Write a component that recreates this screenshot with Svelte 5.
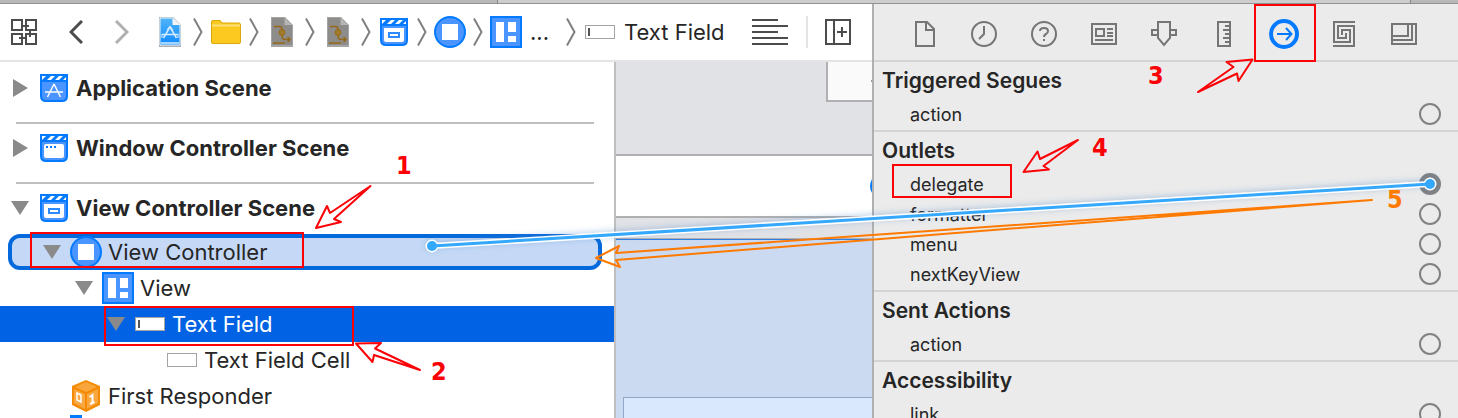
<script lang="ts">
  type Row = { label: string; level: number; icon: string; open?: boolean; state?: string };

  const scenes = [
    { label: "Application Scene", icon: "scene-app", open: false },
    { label: "Window Controller Scene", icon: "scene-window", open: false },
    { label: "View Controller Scene", icon: "scene-view", open: true },
  ];

  const rows: Row[] = [
    { label: "View Controller", level: 1, icon: "controller", open: true, state: "target" },
    { label: "View", level: 2, icon: "view", open: true },
    { label: "Text Field", level: 3, icon: "field", open: true, state: "selected" },
    { label: "Text Field Cell", level: 4, icon: "cell" },
    { label: "First Responder", level: 1, icon: "cube" },
    { label: "", level: 1, icon: "exit" },
  ];

  const crumbs = ["project", "folder", "storyboard", "storyboard", "scene-view", "controller", "view"];

  const tabs = ["file", "history", "help", "identity", "attributes", "size", "connections", "bindings", "effects"];

  const sections = [
    { title: "Triggered Segues", items: ["action"] },
    { title: "Outlets", items: ["delegate", "formatter", "menu", "nextKeyView"] },
    { title: "Sent Actions", items: ["action"] },
    { title: "Accessibility", items: ["link"] },
  ];

  let connected = $state("delegate");
  let activeTab = $state("connections");
</script>

{#snippet chevron()}
  <svg class="chevron" width="10" height="30" viewBox="0 0 10 30">
    <path d="M1 1.5 8.5 15 1 28.5" fill="none" stroke="#7f7f7f" stroke-width="2" />
  </svg>
{/snippet}

{#snippet icon(name: string)}
  {#if name.startsWith("scene")}
    <svg width="28" height="28" viewBox="0 0 28 28">
      <path d="M0 0H28V22Q28 28 22 28H6Q0 28 0 22Z" fill="#057aff" />
      <path d="M2 8H26V22Q26 26 22 26H6Q2 26 2 22Z" fill="#4a95ff" />
      <path d="M2 6V2H6ZM7 6 11 2H15L11 6ZM15 6 19 2H23L19 6ZM23 6 26 3V6Z" fill="#fff" />
      {#if name === "scene-app"}
        <path d="M14 10 20.5 23M14 10 7.5 23M5 18H23" stroke="#fff" stroke-width="1.5" fill="none" />
      {:else if name === "scene-window"}
        <rect x="4" y="10" width="20" height="14" rx="2" fill="#fff" />
        <path d="M6 13H16" stroke="#057aff" stroke-width="2" stroke-dasharray="2" />
      {:else}
        <path d="M4 10H24V22Q24 24 22 24H6Q4 24 4 22Z" fill="#fff" />
        <rect x="9" y="15" width="10" height="4" fill="#fff" stroke="#308aff" stroke-width="2" />
      {/if}
    </svg>
  {:else if name === "controller"}
    <svg width="32" height="32" viewBox="0 0 32 32">
      <circle cx="16" cy="16" r="15" fill="#4a95ff" stroke="#057aff" stroke-width="2" />
      <rect x="8" y="8" width="16" height="16" fill="#fff" />
    </svg>
  {:else if name === "view"}
    <svg width="32" height="32" viewBox="0 0 32 32">
      <rect x="1" y="1" width="30" height="30" fill="#4a95ff" stroke="#057aff" stroke-width="2" />
      <path d="M6 6H14V26H6ZM18 6H26V16H18ZM18 20H26V26H18Z" fill="#fff" />
    </svg>
  {:else if name === "field" || name === "cell"}
    <svg width="30" height="14" viewBox="0 0 30 14">
      <rect x=".5" y=".5" width="29" height="13" fill="#fff" stroke="#a4a4a4" />
      {#if name === "field"}<path d="M4 3V11" stroke="#555" stroke-width="2" />{/if}
    </svg>
  {:else if name === "cube"}
    <svg width="28" height="32" viewBox="0 0 28 32">
      <path d="M14 0 28 6V25L14 32 0 25V6Z" fill="#f58b05" />
      <path d="M14 2 25 7 14 12 3 7Z" fill="#f8a63c" />
      <path d="M2 9 13 14V29L2 23ZM26 9 15 14V29L26 23Z" fill="#f9a740" />
      <path d="M5 13 9 15V22L5 20Z" fill="none" stroke="#fff" stroke-width="1.5" />
      <path d="M17.5 17 20.5 15V23M18 24 22.5 22" fill="none" stroke="#fff" stroke-width="2" />
    </svg>
  {:else if name === "exit"}
    <svg width="32" height="34" viewBox="0 0 32 34">
      <path d="M0 0H12V34H0Z" fill="#057aff" />
    </svg>
  {:else if name === "project"}
    <svg width="24" height="30" viewBox="0 0 24 30">
      <defs>
        <linearGradient id="doc" x1="0" y1="0" x2="0" y2="1">
          <stop offset="0" stop-color="#4fb4f7" />
          <stop offset="1" stop-color="#118aff" />
        </linearGradient>
      </defs>
      <path d="M1 0H15L23 8V30H1Z" fill="#a9afb5" />
      <path d="M2 1H14.5L22 8V28H2Z" fill="url(#doc)" stroke="#e9f4fc" />
      <path d="M14.5 1V8H22Z" fill="#f2f4f5" />
      <path d="M12 10 5.5 21M12 10 18.5 21M3.5 17.5H20.5M3 26H21" stroke="#d3ebff" stroke-width="1.5" fill="none" />
      <path d="M9 13 12 9 15 13M4 18V21M20 18V21" stroke="#d3ebff" fill="none" />
    </svg>
  {:else if name === "folder"}
    <svg width="30" height="24" viewBox="0 0 30 24">
      <path d="M.5 2Q.5.5 2 .5H9Q10 .5 10.5 3H28Q29.5 3 29.5 5V22Q29.5 23.5 28 23.5H2Q.5 23.5.5 22Z" fill="#fbc91f" stroke="#dba80c" />
      <path d="M1 5.5H29" stroke="#ffe07a" stroke-width="2" />
    </svg>
  {:else if name === "storyboard"}
    <svg width="24" height="30" viewBox="0 0 24 30">
      <path d="M1 0H15L23 8V30H1Z" fill="#a5a5a5" />
      <path d="M2 1H14.5L22 8V28H2Z" fill="#8d8c8a" />
      <path d="M14.5 1V8H22Z" fill="#b6b6b6" />
      <path d="M4 9.5H9.5Q12 9.5 12 12V19Q12 22.5 15 22.5H19.5M17.5 20 20 22.5 17.5 25M3 26H15" stroke="#946a17" stroke-width="1.5" fill="none" />
      <circle cx="12" cy="15.5" r="3" fill="#a37b2d" stroke="#946a17" />
    </svg>
  {/if}
{/snippet}

{#snippet tabIcon(name: string)}
  <svg width="32" height="32" viewBox="0 0 32 32" fill="none" stroke="#757575" stroke-width="2">
    {#if name === "file"}
      <path d="M8 4H19L26 11V28H8ZM18 4V12H25" />
    {:else if name === "history"}
      <circle cx="16" cy="16" r="12" />
      <path d="M16 8V16L11 21" />
    {:else if name === "help"}
      <circle cx="16" cy="16" r="12" />
      <path d="M12 13Q12 10 16 10T20 13Q20 15 18 16T16 19M16 21V23" />
    {:else if name === "identity"}
      <path d="M4 6H28V26H4ZM8 11H16V18H8ZM19 11H25M19 15H25M19 18H25M7 22H25" />
    {:else if name === "attributes"}
      <path d="M10 4H22V20L16 27 10 20ZM10 12H4V17H10M22 12H28V17H22" />
    {:else if name === "size"}
      <path d="M10 4H22V28H10ZM22 8H17M22 12H15M22 16H17M22 20H15M22 24H17" />
    {:else if name === "connections"}
      <circle cx="16" cy="16" r="13" stroke="#057aff" stroke-width="4" />
      <path d="M9 16H23M18 10 23.5 16 18 22" stroke="#057aff" />
    {:else if name === "bindings"}
      <path d="M27 4H6V24H22V12H14V17M5 28H26V8H10V20H18V15" />
    {:else}
      <path d="M4 6H28V26H4ZM5 18H20V7M5 22H24V7" />
    {/if}
  </svg>
{/snippet}

{#snippet disclosure(open: boolean | undefined)}
  <span class="disclosure">
    {#if open}
      <svg width="18" height="14" viewBox="0 0 18 14"><path d="M0 0H18L9 14Z" fill="#8a8a8a" /></svg>
    {:else if open === false}
      <svg width="16" height="18" viewBox="0 0 16 18"><path d="M1 0 16 9 1 18Z" fill="#8a8a8a" /></svg>
    {/if}
  </span>
{/snippet}

<div class="window">
  <div class="tabstrip"><span></span><span></span><span></span></div>

  <div class="workspace">
    <main class="editor">
      <nav class="jumpbar" aria-label="Jump bar">
        <button class="related" aria-label="Related items">
          <svg width="26" height="26" viewBox="0 0 26 26" fill="none" stroke="#4c4c4c" stroke-width="2">
            <path d="M1 1H11V11H1ZM15 1H25V11H15ZM1 15H11V25H1ZM15 15H25V25H15ZM11 7H18M19 11V18M8 19H15" />
          </svg>
        </button>
        <button class="back" aria-label="Back">
          <svg width="14" height="24" viewBox="0 0 14 24"><path d="M13 1 2 12 13 23" fill="none" stroke="#4c4c4c" stroke-width="3" /></svg>
        </button>
        <button class="forward" aria-label="Forward">
          <svg width="14" height="24" viewBox="0 0 14 24"><path d="M1 1 12 12 1 23" fill="none" stroke="#b0b0b0" stroke-width="3" /></svg>
        </button>
        {#each crumbs as crumb, i}
          {#if i > 0}{@render chevron()}{/if}
          <button class="crumb" aria-label={crumb}>{@render icon(crumb)}</button>
        {/each}
        <span class="dots">...</span>
        {@render chevron()}
        <button class="current">{@render icon("field")}Text Field</button>
        <button class="lines" aria-label="Editor options">
          <svg width="36" height="26" viewBox="0 0 36 26"><path d="M0 1H26M0 7H36M0 13H26M0 19H36M0 25H36" stroke="#4c4c4c" stroke-width="2" /></svg>
        </button>
        <span class="divider"></span>
        <button aria-label="Add editor">
          <svg width="26" height="26" viewBox="0 0 26 26"><path d="M1 1H25V25H1ZM9 1V25M12 13H22M17 8V18" fill="none" stroke="#4c4c4c" stroke-width="2" /></svg>
        </button>
      </nav>

      <div class="panes">
        <section class="outline" aria-label="Document outline">
          {#each scenes as scene, i}
            {#if i > 0}<hr />{/if}
            <button class="row scene level-0">
              {@render disclosure(scene.open)}
              <span class="icon">{@render icon(scene.icon)}</span>
              {scene.label}
            </button>
          {/each}
          <div class="children">
            {#each rows as row}
              <button class="row level-{row.level} {row.state ?? ''}" aria-label={row.label || "Exit"}>
                {@render disclosure(row.open)}
                <span class="icon">{@render icon(row.icon)}</span>
                {row.label}
              </button>
            {/each}
          </div>
        </section>

        <section class="canvas" aria-label="Canvas">
          <div class="menu-box">
            <svg width="4" height="8" viewBox="0 0 4 8"><path d="M3 3H4V5H3Z" fill="#999" /></svg>
          </div>
          <div class="window-bar"><span></span></div>
          <div class="view-area"><div class="field-area"></div></div>
        </section>
      </div>
    </main>

    <aside class="inspector">
      <div class="tabs">
        {#each tabs as tab}
          <button aria-label={tab} aria-pressed={activeTab === tab} onclick={() => (activeTab = tab)}>
            {@render tabIcon(tab)}
          </button>
        {/each}
      </div>
      {#each sections as section}
        <section class="group">
          <h2>{section.title}</h2>
          {#each section.items as item}
            <div class="outlet">
              <span>{item}</span>
              <button class:connected={connected === item} aria-label="Connect {item}" onclick={() => (connected = item)}></button>
            </div>
          {/each}
        </section>
      {/each}
    </aside>
  </div>

  <!-- connection wire and numbered steps -->
  <svg class="notes" width="1458" height="418" viewBox="0 0 1458 418">
    <defs>
      <filter id="glow" filterUnits="userSpaceOnUse" x="400" y="150" width="1058" height="130">
        <feDropShadow dx="0" dy="-1" stdDeviation="3" flood-color="#4c7fc0" flood-opacity=".4" />
      </filter>
    </defs>
    <g filter="url(#glow)">
      <path d="M432 246 1430 184" stroke="#fff" stroke-width="6" />
      <circle cx="432" cy="246" r="6.5" fill="#fff" />
      <circle cx="1430" cy="184" r="6.5" fill="#fff" />
    </g>
    <path d="M432 246 1430 184" stroke="#33a8fd" stroke-width="3" />
    <circle cx="432" cy="246" r="5" fill="#33a8fd" />
    <circle cx="1430" cy="184" r="5" fill="#33a8fd" />

    <g class="arrows">
      <path d="M370.5 186 330 213 327 206 316 228 341 222 334 219Z" />
      <path d="M420 370 375 348.5 381 343 356 343.5 372.5 362 374 355Z" />
      <path d="M1198 92 1233.5 67 1226.5 62 1252.5 59.5 1238.5 81 1237 73.5Z" />
      <path d="M1078 140 1040 159 1037.5 151.5 1023.5 172 1049 169.5 1043.5 166Z" />
      <path class="orange" d="M1372 200 616 253 619 246 596 258 620 267 616 260Z" />
    </g>
    <g class="boxes">
      <rect x="31" y="233" width="272" height="34" />
      <rect x="105" y="307" width="248" height="38" />
      <rect x="1255" y="5" width="60" height="56" />
      <rect x="893" y="165" width="118" height="32" />
    </g>
    <g class="numbers">
      <text x="396" y="174">1</text>
      <text x="431" y="380">2</text>
      <text x="1148" y="84">3</text>
      <text x="1092" y="156">4</text>
      <text class="orange" x="1387" y="208">5</text>
    </g>
  </svg>
</div>

<style>
  :global(body) {
    margin: 0;
    overflow: hidden;
  }

  .window {
    position: relative;
    display: flex;
    flex-direction: column;
    height: 100vh;
    overflow: hidden;
    background: #fff;
    color: #262626;
    font-family: Inter, "Liberation Sans", sans-serif;
    font-size: 22px;
  }

  button {
    display: flex;
    align-items: center;
    flex-shrink: 0;
    margin: 0;
    padding: 0;
    border: 0;
    background: none;
    color: inherit;
    font: inherit;
    text-align: left;
    white-space: nowrap;
  }

  svg {
    display: block;
    flex-shrink: 0;
  }

  .tabstrip {
    display: flex;
    flex-shrink: 0;
    box-sizing: border-box;
    height: 4px;
    border-bottom: 1px solid #929292;
  }

  .tabstrip span {
    width: 497px;
    background: #b8b8b8;
  }

  .tabstrip span:nth-child(2) {
    flex: 1;
    border: solid #888;
    border-width: 0 1px;
    background: #cdcdcd;
  }

  .tabstrip span:last-child {
    width: 47px;
  }

  .workspace {
    display: flex;
    flex: 1;
    min-height: 0;
  }

  .editor {
    display: flex;
    flex: 1;
    flex-direction: column;
    min-width: 0;
  }

  .jumpbar {
    display: flex;
    align-items: center;
    flex-shrink: 0;
    height: 56px;
    padding: 0 21px 0 11px;
    border-bottom: 2px solid #e4e4e4;
  }

  .back {
    margin: 0 32px;
  }

  .forward {
    margin-right: 18px;
  }

  .crumb {
    justify-content: center;
    width: 46px;
    height: 32px;
  }

  .dots {
    width: 36px;
    padding-left: 1px;
  }

  .current {
    gap: 9px;
    margin-left: 9px;
  }

  .lines {
    margin-left: auto;
  }

  .divider {
    width: 2px;
    height: 32px;
    margin: 0 17px 0 18px;
    background: #e4e4e4;
  }

  .panes {
    display: flex;
    flex: 1;
    min-height: 0;
  }

  .outline {
    flex: 0 0 614px;
    padding-top: 8px;
    border-right: 2px solid #bfbfbf;
    overflow: hidden;
  }

  .outline hr {
    height: 2px;
    margin: 16px 20px 6px 16px;
    border: 0;
    background: #bfbfbf;
  }

  .children {
    padding-top: 8px;
  }

  .row {
    box-sizing: border-box;
    width: 100%;
    height: 36px;
    padding-left: 4px;
  }

  .scene {
    font-weight: 700;
  }

  .level-1 {
    padding-left: 36px;
  }

  .level-2 {
    padding-left: 68px;
  }

  .level-3 {
    padding-left: 100px;
  }

  .level-4 {
    padding-left: 132px;
  }

  .target {
    width: auto;
    min-width: calc(100% - 20px);
    margin: 0 12px 0 8px;
    padding-left: 24px;
    border: 4px solid #0469dc;
    border-radius: 12px;
    background: #c5d9f6;
  }

  .selected {
    background: #0162e3;
    color: #fff;
  }

  .disclosure,
  .icon {
    display: flex;
    align-items: center;
    justify-content: center;
    flex-shrink: 0;
    width: 32px;
  }

  .icon {
    margin: 0 6px 0 2px;
  }

  .canvas {
    display: flex;
    flex: 1;
    flex-direction: column;
    min-width: 0;
    overflow: hidden;
    background: #e1e2e6;
  }

  .menu-box {
    display: flex;
    align-items: center;
    align-self: flex-end;
    justify-content: flex-end;
    flex-shrink: 0;
    width: 44px;
    height: 38px;
    margin-bottom: 52px;
    border: solid #b0b0b0;
    border-width: 0 0 2px 2px;
    background: #fafafa;
  }

  .window-bar {
    display: flex;
    align-items: center;
    justify-content: flex-end;
    flex-shrink: 0;
    height: 60px;
    border: solid #b0b0b0;
    border-width: 2px 0;
    background: #fff;
  }

  .window-bar span {
    width: 24px;
    height: 24px;
    margin-right: -22px;
    border-radius: 50%;
    background: #057aff;
  }

  .view-area {
    flex: 1 0 auto;
    margin-top: 20px;
    padding: 158px 0 0 7px;
    border-top: 1px solid #b0b0b0;
    box-shadow: inset 0 1px #2f7fe8;
    background: #cbdaf1;
  }

  .field-area {
    height: 60px;
    border: solid #93a7c8;
    border-width: 1px 0 0 1px;
    background: #dae8fd;
  }

  .inspector {
    box-sizing: border-box;
    flex: 0 0 586px;
    border-left: 2px solid #b0b0b0;
    background: #ebebeb;
    overflow: hidden;
  }

  .tabs {
    display: flex;
    justify-content: center;
    height: 56px;
    padding-right: 4px;
    border-bottom: 2px solid #d3d3d3;
  }

  .tabs button {
    justify-content: center;
    width: 60px;
    padding-top: 4px;
  }

  .group {
    padding-bottom: 1px;
    border-bottom: 2px solid #d3d3d3;
  }

  h2 {
    margin: 0;
    padding-left: 8px;
    font-size: 21px;
    font-weight: 600;
    line-height: 37px;
  }

  .outlet {
    display: flex;
    align-items: center;
    justify-content: space-between;
    height: 30px;
    padding: 0 17px 0 36px;
    font-size: 18px;
  }

  .outlet button {
    box-sizing: border-box;
    width: 22px;
    height: 22px;
    border: 2px solid #828282;
    border-radius: 50%;
  }

  .outlet button.connected {
    border-width: 5px;
  }

  .notes {
    position: absolute;
    top: 0;
    left: 0;
    pointer-events: none;
  }

  .arrows path {
    fill: none;
    stroke: #fb0207;
    stroke-width: 2;
    stroke-linejoin: round;
  }

  .arrows .orange {
    stroke: #ff7a00;
  }

  .boxes rect {
    fill: none;
    stroke: #fb0207;
    stroke-width: 2;
  }

  .numbers text {
    fill: #fb0207;
    font-family: "DejaVu Sans Condensed", "DejaVu Sans", sans-serif;
    font-size: 25px;
    font-weight: 700;
  }

  .numbers .orange {
    fill: #ff7a00;
  }
</style>
